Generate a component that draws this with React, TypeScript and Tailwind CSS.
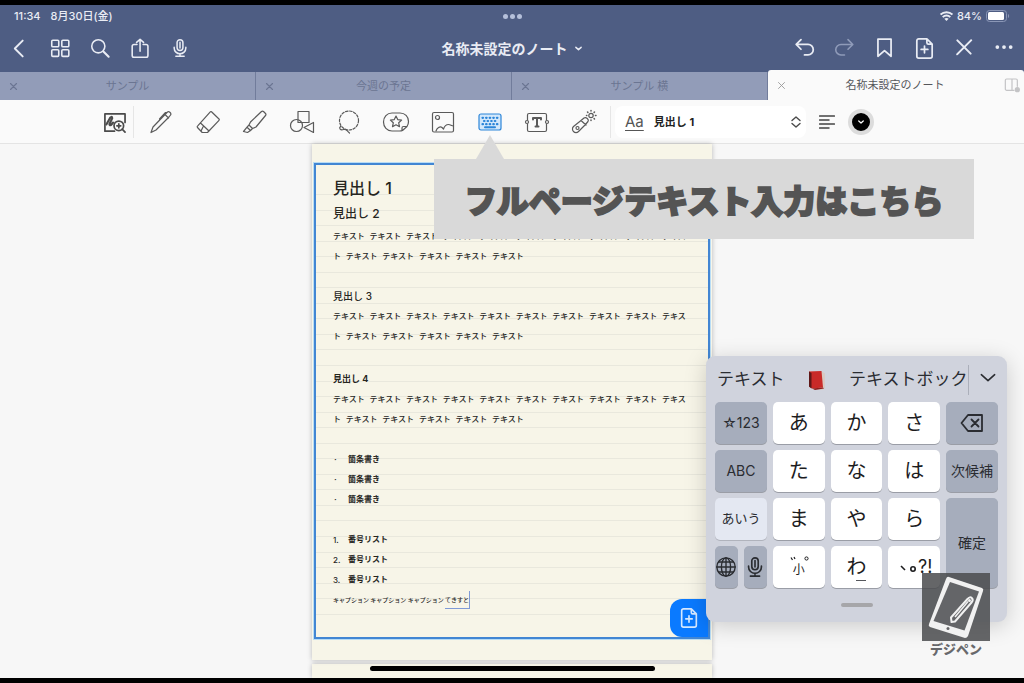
import React from "react";

interface IconProps {
  children: React.ReactNode;
  className?: string;
}

const Icon = ({ children, className = "size-6" }: IconProps) => (
  <svg
    viewBox="0 0 24 24"
    fill="none"
    stroke="currentColor"
    strokeWidth="1.8"
    strokeLinecap="round"
    strokeLinejoin="round"
    className={className}
    aria-hidden="true"
  >
    {children}
  </svg>
);

const PagePlus = ({ className }: { className?: string }) => (
  <Icon className={className}>
    <path d="M14.5 2H6a2 2 0 0 0-2 2v16a2 2 0 0 0 2 2h12a2 2 0 0 0 2-2V7.5zM14.5 2v4a1.500 1.500 0 0 0 1.500 1.500h4M12 9.500v7M8.500 13h7" />
  </Icon>
);

const Mic = ({ className }: { className?: string }) => (
  <Icon className={className}>
    <rect x="8.5" y="2" width="7" height="13" rx="3.5" />
    <path d="M12 5v7M5 11v1a7 7 0 0 0 14 0v-1M12 19v3M7 22h10" />
  </Icon>
);

const leftActions = [
  { label: "戻る", icon: <path d="M14.500 3 5.500 12l9 9" strokeWidth="2.2" /> },
  {
    label: "ページ一覧",
    icon: (
      <>
        <rect x="2" y="2.5" width="8" height="7.5" rx="1.2" />
        <rect x="13.5" y="2.5" width="8" height="7.5" rx="1.2" />
        <rect x="2" y="13.5" width="8" height="7.5" rx="1.2" />
        <rect x="13.5" y="13.5" width="8" height="7.5" rx="1.2" />
      </>
    ),
  },
  {
    label: "検索",
    icon: (
      <>
        <circle cx="9.5" cy="9.5" r="7.5" />
        <path d="m15.300 15.300 6 6" strokeWidth="2.4" />
      </>
    ),
  },
  {
    label: "共有",
    icon: (
      <path d="M8 7.500H4.500a2 2 0 0 0-2 2V20a2 2 0 0 0 2 2h14a2 2 0 0 0 2-2V9.500a2 2 0 0 0-2-2H15M11.500 15V1.500M7.500 5l4-3.500 4 3.500" />
    ),
  },
];

const tabs = ["サンプル", "今週の予定", "サンプル 横"];

const tools = [
  {
    label: "ペン",
    icon: (
      <path d="M2 22.500 4 17 17 3.500l1.500-1.500c1.500-1 4.500 1.500 3 3L20 7 7 20zM16 4.500l3.500 3.500M17.500 3l-1-.5-6 6.500" />
    ),
  },
  {
    label: "消しゴム",
    icon: (
      <path d="M15.500 1.700 23 9a1 1 0 0 1 0 1.400L11.500 22.500H6.200L1.500 17.500a1 1 0 0 1 0-1.400L14.500 1.700a.8.8 0 0 1 1 0zM4.500 13l8.500 8M5 21l2-4" />
    ),
  },
  {
    label: "蛍光ペン",
    icon: (
      <path d="M7.500 12 18.500 1.500a1.500 1.500 0 0 1 2 0l2 2a1.500 1.500 0 0 1 0 2L13 17l-3.500 1.500L6 15zM6 15l-2 2.200 3.500 3.300 2-2M4 17.200.5 21.500l4 1 3-2" />
    ),
  },
  {
    label: "図形",
    icon: (
      <>
        <rect x="8" y="1.500" width="11" height="11" />
        <circle cx="6.500" cy="15.500" r="6" />
        <path d="m14 17.500 9.500-5v10z" />
      </>
    ),
  },
  {
    label: "なげなわ",
    icon: (
      <>
        <circle cx="12" cy="10.5" r="9.5" strokeDasharray="2.5 1.6" />
        <path d="M3.500 16.500c-2 2 0 4 3 3s3 1 6 3.500" />
      </>
    ),
  },
  {
    label: "ステッカー",
    icon: (
      <>
        <path d="M8 3h8c5 0 8.500 3.500 8.500 8.500 0 2-.5 3.500-1.500 5L18.500 20.500c-1 .5-1.500.5-3 .5H8c-5 0-8.500-4-8.500-9S3 3 8 3zM23 16.500h-3.500A1.500 1.500 0 0 0 18 18v2.500" />
        <path d="m12 6 1.700 3.600 3.900.5-2.900 2.700.8 3.900-3.500-1.900-3.500 1.900.8-3.900L6.400 10.100l3.900-.5z" />
      </>
    ),
  },
  {
    label: "画像",
    icon: (
      <>
        <rect x="1.5" y="2.5" width="21" height="19.500" rx="1.5" />
        <circle cx="6.500" cy="7.500" r="2" />
        <path d="M5 21c1-3 4-5 6-3.500L12.500 19c1-3 3-4.500 5-4.500s3 1.500 5 1.500" />
      </>
    ),
  },
  {
    label: "テキスト入力",
    active: true,
    icon: (
      <>
        <rect x="1" y="4" width="22" height="16" rx="2" fill="#d3e8fb" />
        <path d="M4.500 7.800h15M6 11h13M4.500 14.200h15" strokeDasharray="0.5 3.1" strokeWidth="2.2" />
        <path d="M7 17.300h10" strokeWidth="2" />
      </>
    ),
  },
  {
    label: "テキストボックス",
    icon: (
      <>
        <path d="M2.500 10V5A1.500 1.500 0 0 1 4 3.500h16A1.500 1.500 0 0 1 21.500 5v5M2.500 14v6A1.500 1.500 0 0 0 4 21.500h16a1.500 1.500 0 0 0 1.500-1.500v-6" />
        <circle cx="2" cy="12" r="1.5" />
        <circle cx="22" cy="12" r="1.5" />
        <path d="M8 9.500V8h8v1.500M12 8v8.500M10.500 16.500h3" strokeWidth="2" />
      </>
    ),
  },
  {
    label: "レーザーポインター",
    icon: (
      <>
        <path d="m9 10.500 3-2.500c2-1.500 5.500 1.500 4 3.500l-2.500 3-7 7a3.500 3.500 0 0 1-5-5zM9 10.500l5 4.500" />
        <circle cx="5.500" cy="18" r="1.500" />
        <circle cx="19" cy="5.500" r="2.2" />
        <path d="M19 .5v.6M19 10v.5M24 5.500h-.6M14.500 5.500h.3M15.500 2l.4.4M22.500 2l-.4.4M22.500 9l-.4-.4" strokeWidth="1.5" />
      </>
    ),
  },
];

const body =
  "テキスト テキスト テキスト テキスト テキスト テキスト テキスト テキスト テキスト テキスト テキスト テキスト テキスト テキスト テキスト";

const Header = () => (
  <header className="bg-[#4e5d83] text-[#e9ecf4]">
    <div className="grid h-[22px] grid-cols-3 items-center px-[14px] text-[11px] font-medium">
      <div className="flex gap-[10px]">
        <span>11:34</span>
        <span>8月30日(金)</span>
      </div>
      <div className="flex justify-center gap-[2px]">
        <i className="size-[5px] rounded-full bg-[#b5c0da]" />
        <i className="size-[5px] rounded-full bg-[#b5c0da]" />
        <i className="size-[5px] rounded-full bg-[#b5c0da]" />
      </div>
      <div className="flex items-center justify-end gap-1">
        <svg viewBox="0 0 24 18" className="h-[10px] w-[13px]" fill="none" stroke="currentColor" strokeWidth="3.5">
          <path d="M1 6.500c6-6 16-6 22 0M5 11c4-4 10-4 14 0" />
          <path d="m12 18-4-4c2-2 6-2 8 0z" fill="currentColor" stroke="none" />
        </svg>
        <span>84%</span>
        <svg viewBox="0 0 24 12" className="h-3 w-6">
          <rect x=".5" y=".5" width="20" height="11" rx="3" fill="none" stroke="#8b97b6" />
          <rect x="2" y="2" width="16" height="8" rx="1.5" fill="#fff" />
          <path d="M22 4v4c1.500-.5 1.500-3.500 0-4z" fill="#8b97b6" />
        </svg>
      </div>
    </div>

    <nav className="grid h-[43px] grid-cols-3 items-center">
      <div className="flex">
        {leftActions.map((a) => (
          <button key={a.label} aria-label={a.label} className="flex w-10 justify-center">
            <Icon className="size-[21px]">{a.icon}</Icon>
          </button>
        ))}
        <button aria-label="録音" className="flex w-10 justify-center">
          <Mic className="size-5" />
        </button>
      </div>
      <button className="flex items-center justify-center gap-2 text-sm font-bold whitespace-nowrap">
        名称未設定のノート
        <Icon className="size-[7px]">
          <path d="m3 8 9 8 9-8" strokeWidth="5" />
        </Icon>
      </button>
      <div className="flex justify-end">
        <button aria-label="取り消す" className="flex w-10 justify-center">
          <Icon className="size-[21px]">
            <path d="M8 3 2.500 8.500 8 14M3 8.500h13a5.500 5.500 0 0 1 0 12h-4" strokeWidth="2" />
          </Icon>
        </button>
        <button aria-label="やり直す" className="flex w-10 justify-center text-[#8f9bb9]">
          <Icon className="size-[21px]">
            <path d="m16 3 5.500 5.500L16 14M21 8.500H8a5.500 5.500 0 0 0 0 12h4" />
          </Icon>
        </button>
        <button aria-label="ブックマーク" className="flex w-10 justify-center">
          <Icon className="size-[21px]">
            <path d="M4.500 2.500h15V22L12 15.500 4.500 22z" strokeWidth="2" />
          </Icon>
        </button>
        <button aria-label="ページを追加" className="flex w-10 justify-center">
          <PagePlus className="size-[23px]" />
        </button>
        <button aria-label="編集を終了" className="flex w-10 justify-center">
          <Icon className="size-5">
            <path d="m4 4 16 16" strokeWidth="2.4" />
            <path d="M20.500 3.500 4 20l-.5 1 1-.5L21 4" />
          </Icon>
        </button>
        <button aria-label="その他" className="flex w-10 justify-center">
          <Icon className="size-5">
            <path d="M4 12h.01M12 12h.01M20 12h.01" strokeWidth="4.5" />
          </Icon>
        </button>
      </div>
    </nav>

    <div className="grid h-[30px] grid-cols-4 items-end text-[11px]">
      {tabs.map((t) => (
        <div key={t} className="flex h-7 items-center border-r border-[#717c9b] bg-[#929cb8] px-[9px] text-[#6b7592]">
          <button aria-label="タブを閉じる">
            <Icon className="size-[9px]">
              <path d="m4 4 16 16M20 4 4 20" strokeWidth="3" />
            </Icon>
          </button>
          <button className="flex-1 pr-[9px]">{t}</button>
        </div>
      ))}
      <div className="flex h-full items-center rounded-t-[3px] bg-[#fafafa] pr-1 pl-[9px] text-[#55565a]">
        <button aria-label="タブを閉じる" className="text-[#999]">
          <Icon className="size-[9px]">
            <path d="m4 4 16 16M20 4 4 20" strokeWidth="2.4" />
          </Icon>
        </button>
        <button className="flex-1">名称未設定のノート</button>
        <button aria-label="分割表示" className="text-[#c4c4c6]">
          <Icon className="size-4">
            <path d="M15 20H4a2 2 0 0 1-2-2V5a2 2 0 0 1 2-2h14a2 2 0 0 1 2 2v9M12 3v17" />
            <circle cx="20" cy="19" r="3" fill="currentColor" />
          </Icon>
        </button>
      </div>
    </div>
  </header>
);

const Toolbar = () => (
  <div className="flex h-11 items-center border-b border-[#e4e4e4] bg-[#fafafa] pt-px pl-[95px] text-[#4b4b4b]">
    <button aria-label="拡大" className="flex h-8 w-[39px] items-center justify-center border-r border-[#e6e6e6]">
      <Icon className="size-[23px]">
        <path d="M12 21H2V3h21v9" />
        <path d="m3.500 14 4-7c1.500-2 3 0 1.500 2l-2 4c-1 2 1 2.500 2 1l1.500-2" strokeWidth="2.2" />
        <circle cx="16.500" cy="15.500" r="5" />
        <path d="M16.500 13.500v4M14.500 15.500h4M20 19l3 3" />
      </Icon>
    </button>
    <div className="flex px-[3px]">
      {tools.map((t) => (
        <button
          key={t.label}
          aria-label={t.label}
          className={
            t.active
              ? "flex w-[47px] justify-center text-[#2d86d9]"
              : "flex w-[47px] justify-center text-[#5a5a5a]"
          }
        >
          <Icon className="size-6 overflow-visible [stroke-width:1.2]">{t.icon}</Icon>
        </button>
      ))}
    </div>
    <label className="flex h-8 items-center border-l border-[#e6e6e6] pl-1">
      <span className="relative flex h-full w-[191px] items-center gap-[10px] rounded-lg bg-white px-[10px]">
        <span className="text-[15px] text-[#555] underline underline-offset-3">Aa</span>
        <select className="flex-1 appearance-none bg-transparent text-[11px] font-bold text-[#222]" aria-label="スタイル">
          <option>見出し 1</option>
          <option>見出し 2</option>
          <option>見出し 3</option>
        </select>
        <Icon className="pointer-events-none absolute right-1 size-3">
          <path d="m4 9 8-7 8 7M4 15l8 7 8-7" strokeWidth="2.8" />
        </Icon>
      </span>
    </label>
    <button aria-label="行揃え" className="ml-[13px] text-[#444]">
      <Icon className="size-4">
        <path d="M1 3h22M1 9h14M1 15h22M1 21h14" strokeWidth="2.2" />
      </Icon>
    </button>
    <button
      aria-label="文字色"
      className="ml-[13px] flex size-[26px] items-center justify-center rounded-full border-4 border-[#dcdcdc] bg-black text-white"
    >
      <Icon className="size-[6px]">
        <path d="m3 8 9 8 9-8" strokeWidth="5" />
      </Icon>
    </button>
  </div>
);

const Note = () => (
  <main className="mx-auto flex w-[400px] flex-1 flex-col gap-1">
    <article className="relative bg-[#f7f5e8] px-[2px] pt-[19px] pb-[21px] shadow-[0_0_5px_rgba(0,0,0,0.25)]">
      {/* ruled lines */}
      <div className="absolute inset-x-[3px] top-[50px] bottom-[45px] flex flex-col justify-between">
        {Array.from({ length: 28 }, (_, i) => (
          <i key={i} className="h-px bg-[#e9e8dd]" />
        ))}
      </div>

      <div className="relative h-[476px] border-2 border-[#4286d3] px-[17px] pt-[11px] font-['Liberation_Mono','Noto_Sans_CJK_JP',sans-serif] text-[8px] leading-5 font-medium text-[#26261f] outline outline-[#b8dcf5]">
        <h1 className="font-['Inter','Noto_Sans_CJK_JP',sans-serif] text-base leading-6 font-medium">
          見出し 1
        </h1>
        <h2 className="pt-1 pb-[3px] font-['Inter','Noto_Sans_CJK_JP',sans-serif] text-xs leading-5">
          見出し 2
        </h2>
        <p className="mb-[19px]">{body}</p>
        <h3 className="pb-px font-['Inter','Noto_Sans_CJK_JP',sans-serif] text-[10px] leading-5">見出し 3</h3>
        <p className="mb-[22px]">{body}</p>
        <h4 className="pb-px font-['Inter','Noto_Sans_CJK_JP',sans-serif] text-[9px] leading-5 font-bold">
          見出し 4
        </h4>
        <p className="mb-5">{body}</p>
        <ul className="mb-5 font-bold">
          {[1, 2, 3].map((n) => (
            <li key={n} className="flex">
              <span className="w-[15px]">·</span>
              箇条書き
            </li>
          ))}
        </ul>
        <ol className="font-bold">
          {[1, 2, 3].map((n) => (
            <li key={n} className="flex">
              <span className="w-[15px] font-['Inter',sans-serif] font-medium">{n}.</span>
              番号リスト
            </li>
          ))}
        </ol>
        <p className="font-['Noto_Sans_CJK_JP',sans-serif] text-[6px] leading-5 whitespace-pre">
          キャプション キャプション キャプション{" "}
          <span className="border-r border-b border-[#7f9ad6] py-1">てきすと</span>
        </p>

        <button
          aria-label="ページを追加"
          className="absolute right-0 bottom-0 flex h-[38px] w-[38px] items-center justify-center rounded-l-xl bg-[#0a7aff] text-[#d5e8ff]"
        >
          <PagePlus className="size-[22px]" />
        </button>
      </div>
    </article>
    <div className="min-h-[14px] flex-1 bg-[#f7f5e8] shadow-[0_0_5px_rgba(0,0,0,0.25)]" />
  </main>
);

const whiteKey =
  "flex items-center justify-center rounded-[5px] bg-white text-xl text-[#1c1c1e] shadow-[0_1px_0_#9a9da6]";
const grayKey =
  "flex items-center justify-center rounded-[5px] bg-[#a6adbc] text-sm text-[#2a2c31] shadow-[0_1px_0_#9a9da6]";

const Keyboard = () => (
  <section className="absolute top-[212px] right-[17px] w-[301px] rounded-[9px] bg-[#d0d3dd] px-[9px] pb-[15px] text-[#2a2c31] shadow-[0_4px_22px_rgba(0,0,0,0.18)]">
    <div className="flex h-[46px] items-center pt-[2px] text-[17px] whitespace-nowrap">
      <button className="w-[92px] pl-[2px] text-left">テキスト</button>
      <button aria-label="本">
        <svg viewBox="0 0 20 22" className="h-[22px] w-5">
          <path d="M2 2.500 14 2l4 2.500V19l-3 2-10-1.500-3-2z" fill="#d8c9c2" />
          <path d="M2 2.500 14.500 2 16 18.500l-11 1-3-2z" fill="#c92a28" />
          <path d="M2 2.500 4.500 4v15.500L2 17.500z" fill="#5e1717" />
          <path d="m5 19.500 11-1 1 1-9 1.500z" fill="#8d1d1c" />
        </svg>
      </button>
      <button className="ml-[22px] h-[30px] flex-none border-r border-[#abafba]">テキストボック</button>
      <button aria-label="候補を表示" className="flex flex-1 justify-end pr-[2px] pb-1">
        <Icon className="size-4">
          <path d="m2 7 10 9 10-9" strokeWidth="2.4" />
        </Icon>
      </button>
    </div>

    <div className="grid auto-rows-[42px] grid-cols-5 gap-[6px]">
      <button className={grayKey}>☆123</button>
      <button className={whiteKey}>あ</button>
      <button className={whiteKey}>か</button>
      <button className={whiteKey}>さ</button>
      <button className={grayKey} aria-label="削除">
        <Icon className="size-6">
          <path d="M8 4h14v16H8l-6.500-8zM11.500 8.500l7 7M18.500 8.500l-7 7" />
        </Icon>
      </button>

      <button className={grayKey}>ABC</button>
      <button className={whiteKey}>た</button>
      <button className={whiteKey}>な</button>
      <button className={whiteKey}>は</button>
      <button className={grayKey}>次候補</button>

      <button className="flex items-center justify-center rounded-[5px] bg-[#e4e8f2] text-[13px] shadow-[0_1px_0_#b0b3bc]">
        あいう
      </button>
      <button className={whiteKey}>ま</button>
      <button className={whiteKey}>や</button>
      <button className={whiteKey}>ら</button>
      <button className={`${grayKey} row-span-2`}>確定</button>

      <div className="grid grid-cols-2 gap-[6px]">
        <button className={grayKey} aria-label="地球儀">
          <Icon className="size-[22px] [stroke-width:1.5]">
            <circle cx="12" cy="12" r="10" />
            <ellipse cx="12" cy="12" rx="5" ry="10" />
            <path d="M12 2v20M2 12h20M4 6.500h16M4 17.500h16" />
          </Icon>
        </button>
        <button className={grayKey} aria-label="音声入力">
          <Mic className="size-[22px]" />
        </button>
      </div>
      <button className={`${whiteKey} flex-col`}>
        <svg viewBox="0 0 20 6" className="h-[6px] w-5" fill="none" stroke="currentColor">
          <path d="m2 1.500 1.500 2.500M5 1l1 2" strokeWidth="1.2" />
          <circle cx="17.500" cy="2.500" r="1.6" />
        </svg>
        <span className="text-xs leading-4">小</span>
      </button>
      <button className={whiteKey}>
        <span className="relative">
          わ
          <i className="absolute right-0 bottom-0 h-px w-[10px] bg-[#55575c]" />
        </span>
      </button>
      <button className={`${whiteKey} pl-1`}>
        <svg viewBox="0 0 18 10" className="h-[10px] w-[18px]" fill="none" stroke="currentColor" strokeWidth="1.6">
          <path d="m1 4 4 4" />
          <circle cx="13" cy="7" r="2.2" />
        </svg>
        <span className="text-lg">?!</span>
      </button>
    </div>

    <div className="mx-auto mt-[15px] h-1 w-8 rounded-full bg-[#a6a6a9]" />
  </section>
);

const Callout = () => (
  <aside className="absolute top-[15px] left-[434px] flex h-20 w-[540px] items-center justify-center bg-[#d9d9d9] pt-[6px] text-[32px] font-black whitespace-nowrap text-[#545454] [-webkit-text-stroke:2px_#545454]">
    <svg viewBox="0 0 28 24" className="absolute -top-6 left-[42px] h-6 w-7" fill="#d9d9d9">
      <path d="M14 0 28 24H0z" />
    </svg>
    フルページテキスト入力はこちら
  </aside>
);

const Watermark = () => (
  <div className="absolute right-[34px] bottom-[21px] flex w-[68px] flex-col items-center">
    <svg viewBox="0 0 68 68" className="size-[68px]">
      <rect width="68" height="68" fill="#4a4b4e" fillOpacity="0.85" />
      <path
        d="M27 4 60 15q2 1 1 3L46 63q-1 2-3 2L8 54q-2-1-1-3L24 6q1-3 3-2z"
        fill="#f1f1f1"
      />
      <path d="M28 9 57 18.500 42.500 57.500 11.500 48z" fill="#646568" />
      <circle cx="26" cy="55.500" r="1.5" fill="#646568" />
      <path
        d="m29.500 49-.5-4.500L45.500 26c3-4 7 0 4 3.500L33 48.500z"
        fill="#646568"
        stroke="#f1f1f1"
        strokeWidth="2"
        strokeLinejoin="round"
      />
      <path d="m33 44 13-15.500" stroke="#f1f1f1" strokeWidth="1.5" />
      <circle cx="47.500" cy="27.500" r="1.5" fill="#f1f1f1" />
    </svg>
    <span className="text-[13px] leading-4 font-black text-[#68696c]">デジペン</span>
  </div>
);

export default function App() {
  return (
    <div className="flex min-h-screen flex-col border-y-[5px] border-black bg-[#f7f7f7] font-['Inter','Noto_Sans_CJK_JP',sans-serif]">
      <Header />
      <Toolbar />
      <div className="relative flex flex-1 flex-col">
        <Note />
        <Keyboard />
        <Callout />
        <Watermark />
        {/* home indicator */}
        <div className="absolute inset-x-0 bottom-[7px] mx-auto h-[5px] w-[285px] rounded-full bg-black" />
      </div>
    </div>
  );
}
